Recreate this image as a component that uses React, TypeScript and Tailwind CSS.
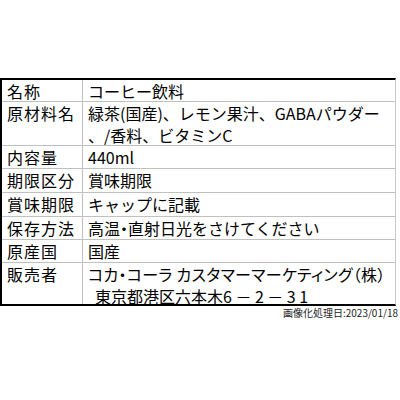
import React from "react";

type Row = { label: string; lines: React.ReactNode[]; h: string };

const rows: Row[] = [
  { label: "名称", lines: ["コーヒー飲料"], h: "h-[21px]" },
  { label: "原材料名", lines: ["緑茶(国産)、レモン果汁、GABAパウダー", "、/香料、ビタミンC"], h: "h-[44px]" },
  { label: "内容量", lines: ["440ml"], h: "h-[23px]" },
  { label: "期限区分", lines: ["賞味期限"], h: "h-[24px]" },
  { label: "賞味期限", lines: ["キャップに記載"], h: "h-[24px]" },
  {
    label: "保存方法",
    lines: [
      <span key="a">
        高温<span className="[font-feature-settings:'palt']">・</span>直射日光をさけてください
      </span>,
    ],
    h: "h-[23px]",
  },
  { label: "原産国", lines: ["国産"], h: "h-[23px]" },
  {
    label: "販売者",
    lines: [
      <span key="a" className="[font-feature-settings:'palt'] tracking-[0.3px]">
        コカ・コーラ カスタマーマーケティング（株）
      </span>,
      <span key="b" className="pl-[7px]">
        東京都港区六本木<span className="tracking-[3.5px]">6－2－31</span>
      </span>,
    ],
    h: "h-[42px]",
  },
];

export default function App() {
  return (
    <div
      className="w-[400px] h-[400px] bg-white pt-[78px] text-black"
      style={{ fontFamily: '"Noto Sans CJK JP", "Noto Sans", sans-serif' }}
    >
      <div className="w-[396px] border-t-2 border-b-2 border-l-2 border-black border-r border-r-[#c8c8c8] flex flex-col">
        {rows.map((r, i) => (
          <div key={i} className={`flex ${r.h} ${i > 0 ? "border-t border-[#c0c0c0]" : ""}`}>
            <div className="w-[81px] shrink-0 border-r border-[#c0c0c0] pl-[5px] text-[16px] leading-[22px] tracking-[1px]">
              {r.label}
            </div>
            <div className="pl-[5px] text-[16px] leading-[22px] flex flex-col whitespace-nowrap">
              {r.lines.map((l, j) => (
                <span key={j}>{l}</span>
              ))}
            </div>
          </div>
        ))}
      </div>
      <div className="w-[398px] text-right text-[10px] leading-[12px] pt-px text-[#222]">
        画像化処理日:2023/01/18
      </div>
    </div>
  );
}
